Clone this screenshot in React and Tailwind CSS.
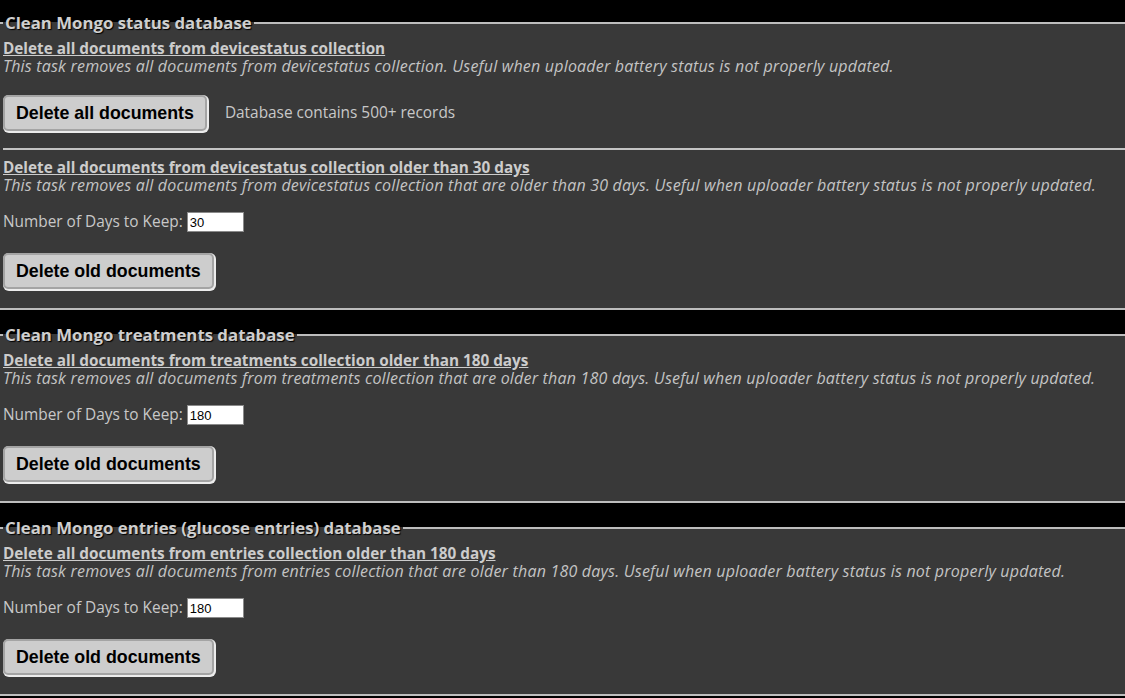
import React from 'react';

const sans = { fontFamily: '"Open Sans", "DejaVu Sans", sans-serif' };
const arial = { fontFamily: '"Liberation Sans", Arial, sans-serif' };

const DaysInput = ({ value }) => (
  <div className="mt-[18px] flex items-center h-[20px] text-[15.4px] text-[#c8c8c8]">
    <span>Number of Days to Keep:</span>
    <input
      type="text"
      defaultValue={value}
      style={arial}
      className="ml-[4px] w-[57px] h-[20px] px-[2px] bg-white border border-[#8a8a8a] text-[13px] text-black outline-none"
    />
  </div>
);

const ActionButton = ({ children }) => (
  <button
    style={arial}
    className="h-[36px] px-[11px] bg-[#cdcdcd] border-2 border-[#a4a4a4] rounded-[5px] shadow-[1px_1px_0_1px_#ececec] text-[17.8px] font-bold text-black leading-[18px]"
  >
    {children}
  </button>
);

const Task = ({ title, text, days, button, note, gap }) => (
  <div>
    <a href="#" className="block text-[15.3px] font-bold underline leading-[18px] text-[#cccccc]">
      {title}
    </a>
    <div className="text-[16px] tracking-[0.2px] italic leading-[18px] text-[#c4c4c4]">{text}</div>
    {days && <DaysInput value={days} />}
    <div className={`flex items-center ${gap}`}>
      <ActionButton>{button}</ActionButton>
      {note && <span className="ml-[18px] text-[15.4px] text-[#c8c8c8]">{note}</span>}
    </div>
  </div>
);

const Box = ({ legend, children }) => (
  <fieldset className="border-y-2 border-[#bdbdbd] bg-[#393939] px-[3px] pb-[19px] min-w-0">
    <legend className="px-[2px] text-[16.8px] font-bold leading-[20px] text-[#cfcfcf] [text-shadow:1px_1px_1px_#000]">
      {legend}
    </legend>
    <div className="pt-[6px]">{children}</div>
  </fieldset>
);

export default function App() {
  return (
    <div style={sans} className="min-h-screen bg-black pt-[13px] flex flex-col gap-[15px]">
      <Box legend="Clean Mongo status database">
        <Task
          title="Delete all documents from devicestatus collection"
          text="This task removes all documents from devicestatus collection. Useful when uploader battery status is not properly updated."
          button="Delete all documents"
          note="Database contains 500+ records"
          gap="mt-[20px]"
        />
        <hr className="mt-[17px] mb-[8px] -mr-[3px] border-0 border-t-2 border-[#c4c4c4]" />
        <Task
          title="Delete all documents from devicestatus collection older than 30 days"
          text="This task removes all documents from devicestatus collection that are older than 30 days. Useful when uploader battery status is not properly updated."
          days="30"
          button="Delete old documents"
          gap="mt-[21px]"
        />
      </Box>
      <Box legend="Clean Mongo treatments database">
        <Task
          title="Delete all documents from treatments collection older than 180 days"
          text="This task removes all documents from treatments collection that are older than 180 days. Useful when uploader battery status is not properly updated."
          days="180"
          button="Delete old documents"
          gap="mt-[21px]"
        />
      </Box>
      <Box legend="Clean Mongo entries (glucose entries) database">
        <Task
          title="Delete all documents from entries collection older than 180 days"
          text="This task removes all documents from entries collection that are older than 180 days. Useful when uploader battery status is not properly updated."
          days="180"
          button="Delete old documents"
          gap="mt-[21px]"
        />
      </Box>
    </div>
  );
}
